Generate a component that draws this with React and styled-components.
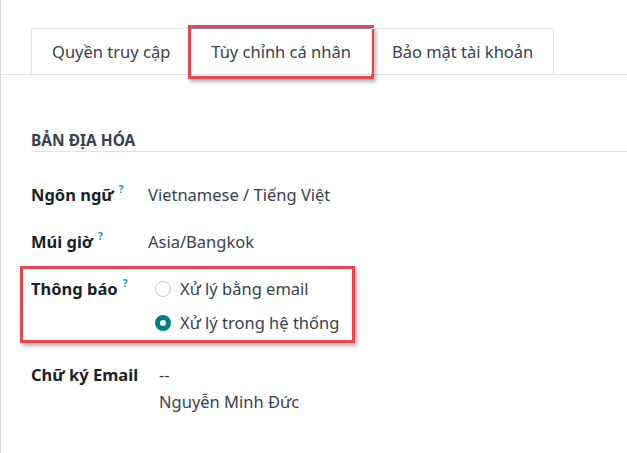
import styled, { createGlobalStyle } from "styled-components";

const GlobalStyle = createGlobalStyle`
  body {
    margin: 0;
    background: #ffffff;
    font-family: "Noto Sans", "Open Sans", sans-serif;
    color: #374151;
  }
`;

const Page = styled.div`
  min-height: 453px;
  box-sizing: border-box;
  border-left: 1px solid #d9dadc;
  padding-top: 28px;
  overflow: hidden;
`;

const TabBar = styled.div`
  display: flex;
  padding-left: 30px;
  border-bottom: 1px solid #dee2e6;
`;

const Tab = styled.div`
  position: relative;
  height: 46px;
  box-sizing: border-box;
  padding: 0 20px;
  margin-right: -1px;
  display: flex;
  align-items: center;
  border: 1px solid #dee2e6;
  border-bottom: none;
  border-top-color: ${(props) => (props.active ? "#6d8ad8" : "#dee2e6")};
  font-size: 16.5px;
  color: #374151;
  white-space: nowrap;

  &::after {
    content: "";
    display: ${(props) => (props.highlight ? "block" : "none")};
    position: absolute;
    top: -4px;
    left: -3px;
    right: -3px;
    bottom: -5px;
    border: 3px solid #f0434a;
    box-shadow: 2px 3px 4px rgba(0, 0, 0, 0.3);
    pointer-events: none;
  }
`;

const Sheet = styled.div`
  padding-left: 30px;
`;

const SectionTitle = styled.div`
  margin-top: 55px;
  padding-bottom: 1px;
  line-height: 20px;
  font-size: 15.5px;
  font-weight: 700;
  color: #374151;
  border-bottom: 1px solid #dee2e6;
`;

const FormGrid = styled.div`
  margin-top: 31px;
  display: grid;
  grid-template-columns: 117px 1fr;
  row-gap: 23px;
  line-height: 24px;
  font-size: 16.5px;
`;

const Label = styled.div`
  position: relative;
  font-weight: 700;
  color: #1a1f29;
  white-space: nowrap;
  margin-top: ${(props) => props.offset || 0}px;

  &::after {
    content: "";
    display: ${(props) => (props.highlight ? "block" : "none")};
    position: absolute;
    top: -11px;
    left: -11px;
    width: 335px;
    height: 77px;
    box-sizing: border-box;
    border: 3px solid #f0434a;
    box-shadow: 2px 3px 4px rgba(0, 0, 0, 0.3);
    pointer-events: none;
  }
`;

const Help = styled.sup`
  margin-left: 5px;
  font-size: 10px;
  font-weight: 700;
  color: #1b8fc2;
  vertical-align: 8px;
  line-height: 0;
`;

const Value = styled.div`
  color: #374151;
  padding-left: ${(props) => props.indent || 0}px;
  margin-top: ${(props) => props.offset || 0}px;
`;

const RadioGroup = styled.div`
  display: flex;
  flex-direction: column;
  gap: 10px;
  padding-left: 7px;
`;

const RadioOption = styled.label`
  display: flex;
  align-items: center;
  gap: 9px;
  color: #374151;
`;

const RadioDot = styled.span`
  width: 16px;
  height: 16px;
  box-sizing: border-box;
  border-radius: 50%;
  background: #ffffff;
  border: ${(props) =>
    props.checked ? "5px solid #017e84" : "1px solid #c8c8c8"};
  flex-shrink: 0;
`;

const Signature = styled.div`
  display: flex;
  flex-direction: column;
  gap: 3px;
`;

const fields = [
  { label: "Ngôn ngữ", help: true, value: "Vietnamese / Tiếng Việt" },
  { label: "Múi giờ", help: true, value: "Asia/Bangkok" },
];

const App = () => {
  return (
    <>
      <GlobalStyle />
      <Page>
        <TabBar>
          <Tab>Quyền truy cập</Tab>
          <Tab active highlight>
            Tùy chỉnh cá nhân
          </Tab>
          <Tab>Bảo mật tài khoản</Tab>
        </TabBar>
        <Sheet>
          <SectionTitle>BẢN ĐỊA HÓA</SectionTitle>
          <FormGrid>
            {fields.map((f) => (
              <>
                <Label key={f.label}>
                  {f.label}
                  {f.help && <Help>?</Help>}
                </Label>
                <Value>{f.value}</Value>
              </>
            ))}
            <Label highlight>
              Thông báo<Help>?</Help>
            </Label>
            <RadioGroup>
              <RadioOption>
                <RadioDot />
                Xử lý bằng email
              </RadioOption>
              <RadioOption>
                <RadioDot checked />
                Xử lý trong hệ thống
              </RadioOption>
            </RadioGroup>
            <Label offset={5}>Chữ ký Email</Label>
            <Value indent={11} offset={5}>
              <Signature>
                <div>--</div>
                <div>Nguyễn Minh Đức</div>
              </Signature>
            </Value>
          </FormGrid>
        </Sheet>
      </Page>
    </>
  );
};

export default App;
